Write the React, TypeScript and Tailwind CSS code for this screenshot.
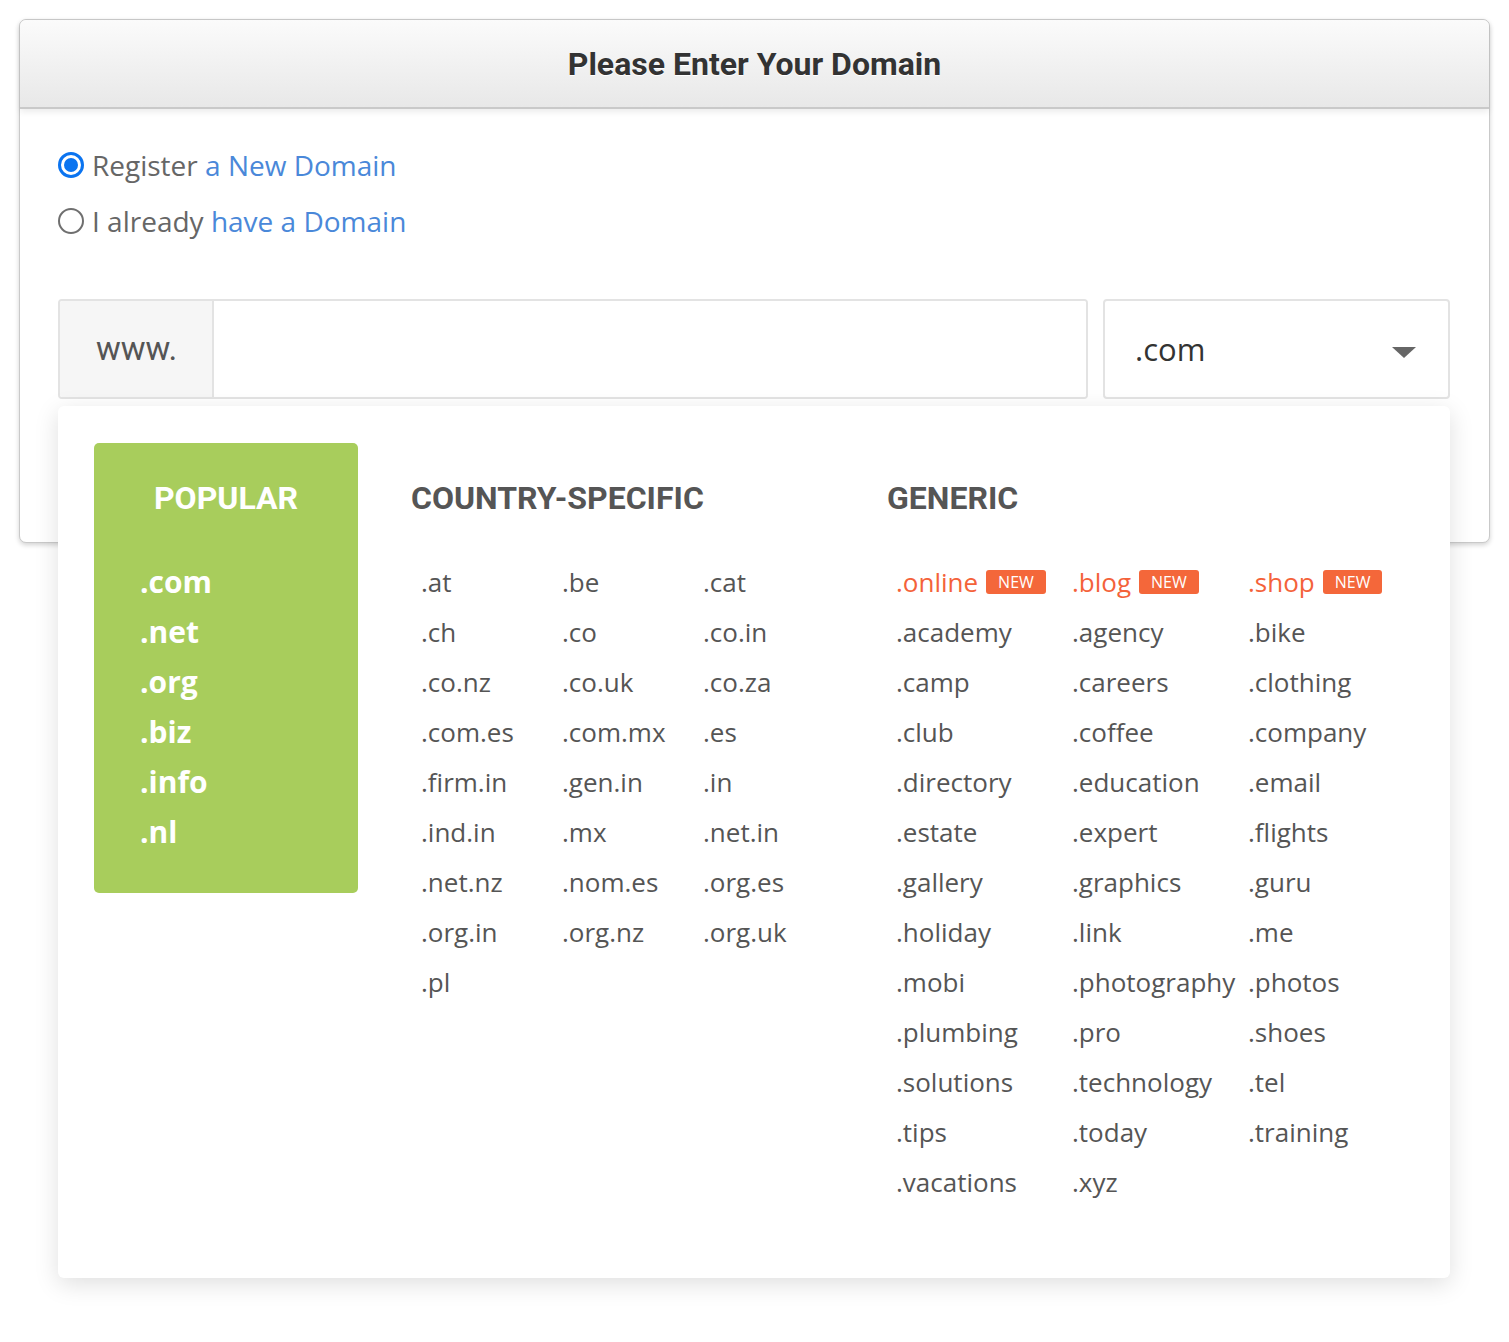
import React from 'react';

const popular = ['.com', '.net', '.org', '.biz', '.info', '.nl'];

const country = [
  '.at', '.be', '.cat', '.ch', '.co', '.co.in', '.co.nz', '.co.uk', '.co.za',
  '.com.es', '.com.mx', '.es', '.firm.in', '.gen.in', '.in', '.ind.in', '.mx', '.net.in',
  '.net.nz', '.nom.es', '.org.es', '.org.in', '.org.nz', '.org.uk', '.pl',
];

const generic = [
  '.academy', '.agency', '.bike', '.camp', '.careers', '.clothing', '.club', '.coffee', '.company',
  '.directory', '.education', '.email', '.estate', '.expert', '.flights', '.gallery', '.graphics', '.guru',
  '.holiday', '.link', '.me', '.mobi', '.photography', '.photos', '.plumbing', '.pro', '.shoes',
  '.solutions', '.technology', '.tel', '.tips', '.today', '.training', '.vacations', '.xyz',
];

const fresh = ['.online', '.blog', '.shop'];

function Radio({ checked }: { checked?: boolean }) {
  if (checked) {
    return (
      <span className="w-[26px] h-[26px] rounded-full border-[3px] border-[#0b74f0] flex items-center justify-center bg-white">
        <span className="w-[14px] h-[14px] rounded-full bg-[#0b74f0]" />
      </span>
    );
  }
  return <span className="w-[26px] h-[26px] rounded-full border-2 border-[#6f6f6f] bg-white" />;
}

function App() {
  return (
    <div className="min-h-[1342px] bg-white p-[19px] font-['Open_Sans',sans-serif]">
      <div className="rounded-[7px] border border-[#c9c9c9] bg-white shadow-[0_2px_5px_rgba(0,0,0,0.18)]">
        <div className="h-[89px] rounded-t-[7px] bg-gradient-to-b from-[#fbfbfb] to-[#e8e8e8] border-b-2 border-[#c9c9c9] flex items-center justify-center shadow-[0_3px_6px_rgba(0,0,0,0.08)]">
          <h1 className="font-['Roboto',sans-serif] font-bold text-[32px] text-[#333] [text-shadow:0_1px_0_#fff]">Please Enter Your Domain</h1>
        </div>
        <div className="pt-[28px] pb-[143px] pl-[38px] pr-[39px]">
          <label className="h-[56px] flex items-center gap-[8px] text-[28px] text-[#666]">
            <Radio checked />
            <span>Register <span className="text-[#4a88d9]">a New Domain</span></span>
          </label>
          <label className="h-[56px] flex items-center gap-[8px] text-[28px] text-[#666]">
            <Radio />
            <span>I already <span className="text-[#4a88d9]">have a Domain</span></span>
          </label>

          <div className="relative mt-[50px]">
            <div className="flex gap-[15px] h-[100px]">
              <div className="flex-1 flex rounded-[4px] border-2 border-[#e3e3e3] overflow-hidden">
                <div className="w-[154px] bg-[#f6f6f6] border-r-2 border-[#e3e3e3] flex items-center pl-[36px] font-['Roboto',sans-serif] text-[33px] text-[#555]">www.</div>
                <div className="flex-1 bg-white" />
              </div>
              <div className="w-[347px] rounded-[4px] border-2 border-[#e3e3e3] flex items-center justify-between pl-[30px] pr-[32px]">
                <span className="text-[31px] text-[#333]">.com</span>
                <svg className="mt-[6px]" width="24" height="11" viewBox="0 0 24 11"><path d="M0 0h24L12 11z" fill="#666" /></svg>
              </div>
            </div>

            <div className="absolute left-0 right-0 top-[107px] h-[872px] rounded-[6px] bg-white shadow-[0_6px_24px_rgba(0,0,0,0.13)] flex items-start pt-[37px] px-[36px]">
              <div className="shrink-0 w-[264px] h-[450px] rounded-[5px] bg-[#a8cd5c] pt-[36px]">
                <div className="h-[38px] leading-[38px] text-center font-['Roboto',sans-serif] font-bold text-[32px] text-white">POPULAR</div>
                <div className="mt-[40px] pl-[46px]">
                  {popular.map((d) => (
                    <div key={d} className="h-[50px] leading-[50px] font-bold text-[30px] text-white">{d}</div>
                  ))}
                </div>
              </div>

              <div className="shrink-0 ml-[53px] w-[476px] pt-[36px]">
                <div className="h-[38px] leading-[38px] font-['Roboto',sans-serif] font-bold text-[32px] text-[#555]">COUNTRY-SPECIFIC</div>
                <div className="mt-[40px] pl-[10px] grid grid-cols-[141px_141px_141px]">
                  {country.map((d) => (
                    <div key={d} className="h-[50px] leading-[50px] text-[26px] text-[#555]">{d}</div>
                  ))}
                </div>
              </div>

              <div className="shrink-0 pt-[36px]">
                <div className="h-[38px] leading-[38px] font-['Roboto',sans-serif] font-bold text-[32px] text-[#555]">GENERIC</div>
                <div className="mt-[40px] pl-[9px] grid grid-cols-[176px_176px_176px]">
                  {fresh.map((d) => (
                    <div key={d} className="h-[50px] flex items-center gap-[8px] text-[26px] text-[#f4623a]">
                      <span>{d}</span>
                      <span className="h-[24px] px-[12px] rounded-[3px] bg-[#f4673a] text-white text-[16px] leading-[24px]">NEW</span>
                    </div>
                  ))}
                  {generic.map((d) => (
                    <div key={d} className="h-[50px] leading-[50px] text-[26px] text-[#555]">{d}</div>
                  ))}
                </div>
              </div>
            </div>
          </div>
        </div>
      </div>
    </div>
  );
}

export default App;
